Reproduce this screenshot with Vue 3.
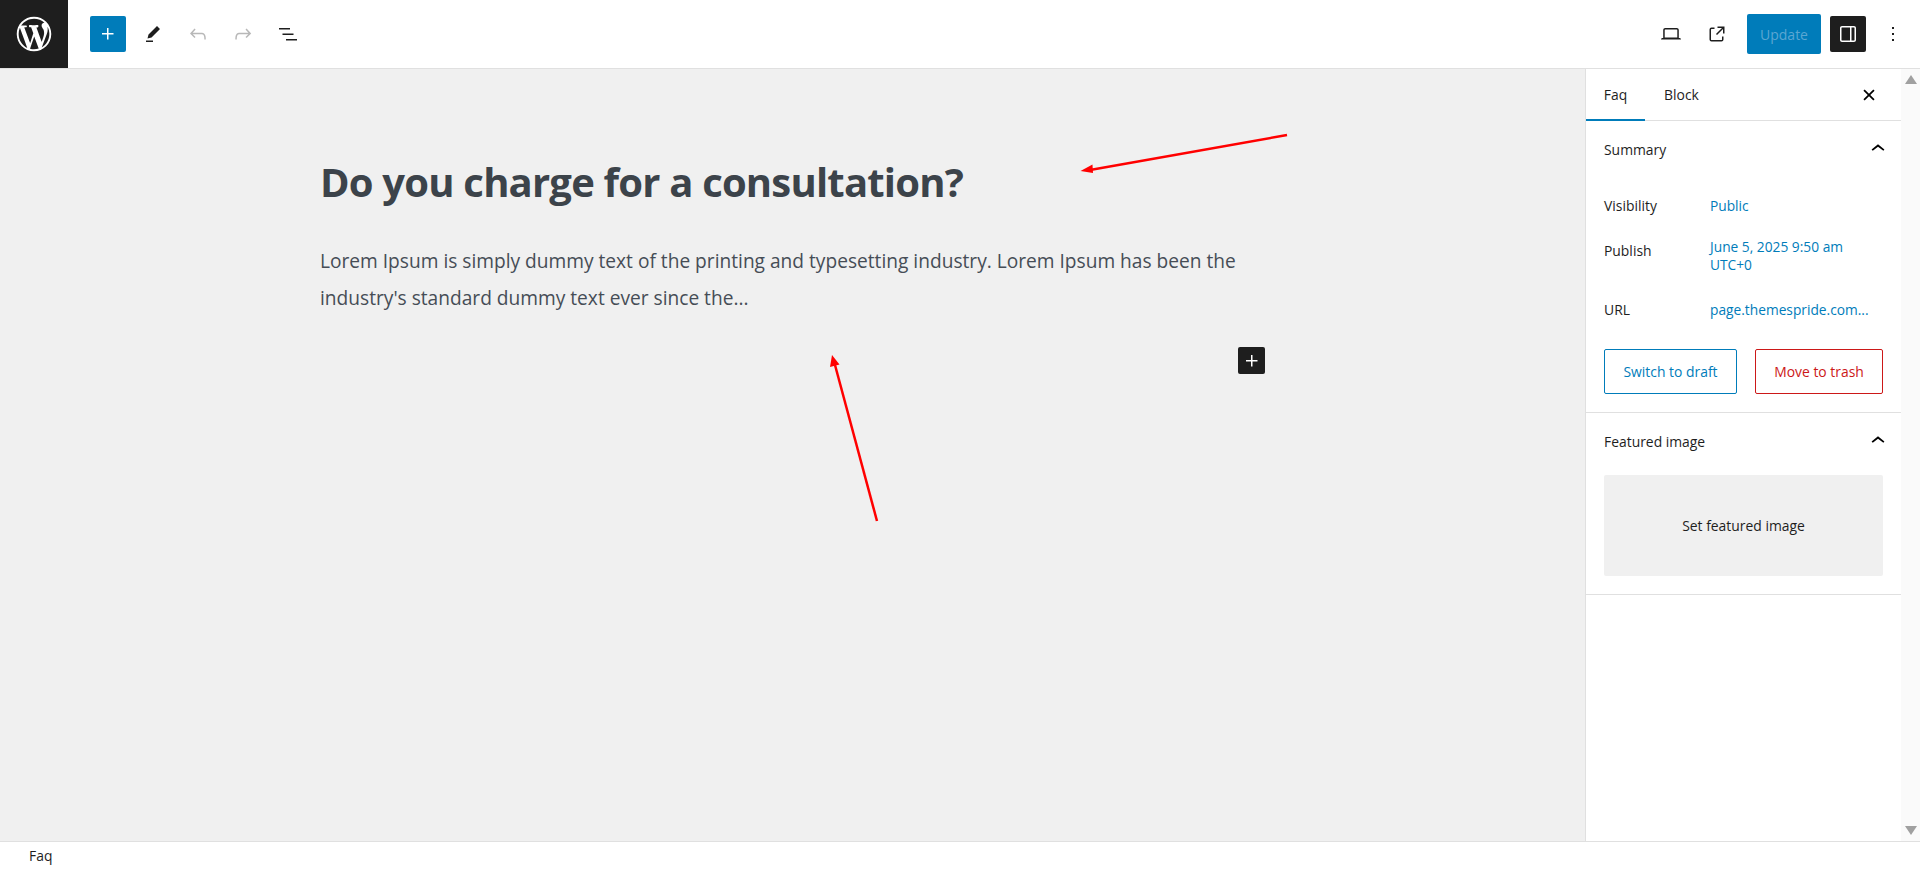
<template>
  <div class="editor">
    <header class="topbar">
      <div class="logo">
        <svg width="38" height="38" viewBox="-1 -1 22 22"><path fill="#fff" d="M20 10c0-5.51-4.49-10-10-10C4.48 0 0 4.49 0 10c0 5.52 4.48 10 10 10 5.51 0 10-4.48 10-10zM7.78 15.37L4.37 6.22c.55-.02 1.17-.08 1.17-.08.5-.06.44-1.13-.06-1.11 0 0-1.45.11-2.37.11-.18 0-.37 0-.58-.01C4.12 2.69 6.87 1.11 10 1.11c2.33 0 4.45.87 6.05 2.34-.68-.11-1.65.39-1.65 1.58 0 .74.45 1.36.9 2.1.35.61.55 1.36.55 2.46 0 1.49-1.4 5-1.4 5l-3.03-8.37c.54-.02.82-.17.82-.17.5-.05.44-1.25-.06-1.22 0 0-1.44.12-2.38.12-.87 0-2.33-.12-2.33-.12-.5-.03-.56 1.2-.06 1.22l.92.08 1.26 3.41zM17.41 10c.24-.64.74-1.87.43-4.25.7 1.29 1.05 2.71 1.05 4.25 0 3.29-1.73 6.24-4.4 7.78.97-2.59 1.94-5.2 2.92-7.78zM6.1 18.09C3.12 16.65 1.11 13.53 1.11 10c0-1.3.23-2.48.72-3.59C3.25 10.3 4.67 14.2 6.1 18.09zm4.03-6.63l2.58 6.98c-.86.29-1.76.45-2.71.45-.79 0-1.57-.11-2.29-.33.81-2.38 1.62-4.74 2.42-7.1z"/></svg>
      </div>
      <div class="tools">
        <button class="icon-btn primary"><svg width="24" height="24" viewBox="0 0 24 24"><path d="M11 12.5V17.5H12.5V12.5H17.5V11H12.5V6H11V11H6V12.5H11Z"/></svg></button>
        <button class="icon-btn"><svg width="24" height="24" viewBox="0 0 24 24"><path d="m19 7-3-3-8.5 8.5-1 4 4-1L19 7Zm-7 11.5H5V20h7v-1.5Z"/></svg></button>
        <button class="icon-btn muted"><svg width="24" height="24" viewBox="0 0 24 24"><path d="M18.3 11.7c-.6-.6-1.4-.9-2.3-.9H6.7l2.9-3.3-1.1-1-4.5 5L8.5 16l1-1-2.7-2.7H16c.5 0 .9.2 1.3.5 1 1 1 3.4 1 4.5v.3h1.5v-.2c0-1.5 0-4.3-1.5-5.7z"/></svg></button>
        <button class="icon-btn muted"><svg width="24" height="24" viewBox="0 0 24 24"><path d="M15.6 6.5l-1.1 1 2.9 3.3H8c-.9 0-1.7.3-2.3.9-1.4 1.5-1.4 4.2-1.4 5.6v.2h1.5v-.3c0-1.1 0-3.5 1-4.5.3-.3.7-.5 1.3-.5h9.2L14.5 15l1.1 1.1 4.6-4.6-4.6-5z"/></svg></button>
        <button class="icon-btn"><svg width="24" height="24" viewBox="0 0 24 24"><path d="M3 6h11v1.5H3V6Zm3.5 5.5h11V13h-11v-1.5ZM21 17H10v1.5h11V17Z"/></svg></button>
      </div>
      <div class="actions">
        <button class="icon-btn"><svg width="24" height="24" viewBox="0 0 24 24"><path d="M20.5 16h-.7V8c0-1.1-.9-2-2-2H6.2c-1.1 0-2 .9-2 2v8h-.7c-.8 0-1.5.7-1.5 1.5h20c0-.8-.7-1.5-1.5-1.5zM5.7 8c0-.3.2-.5.5-.5h11.6c.3 0 .5.2.5.5v7.6H5.7V8z"/></svg></button>
        <button class="icon-btn"><svg width="24" height="24" viewBox="0 0 24 24"><path d="M19.5 4.5h-7V6h4.44l-5.97 5.97 1.06 1.06L18 7.06v4.44h1.5v-7Zm-13 1a2 2 0 0 0-2 2v10a2 2 0 0 0 2 2h10a2 2 0 0 0 2-2v-3H17v3a.5.5 0 0 1-.5.5h-10a.5.5 0 0 1-.5-.5v-10a.5.5 0 0 1 .5-.5h3V5.5h-3Z"/></svg></button>
        <button class="update">Update</button>
        <button class="icon-btn dark"><svg width="24" height="24" viewBox="0 0 24 24"><path d="M18 4H6c-1.1 0-2 .9-2 2v12c0 1.1.9 2 2 2h12c1.1 0 2-.9 2-2V6c0-1.1-.9-2-2-2zm-4 14.5H6c-.3 0-.5-.2-.5-.5V6c0-.3.2-.5.5-.5h8v13zm4.5-.5c0 .3-.2.5-.5.5h-2.5v-13H18c.3 0 .5.2.5.5v12z"/></svg></button>
        <button class="icon-btn more"><svg width="24" height="24" viewBox="0 0 24 24"><path d="M13 19h-2v-2h2v2zm0-6h-2v-2h2v2zm0-6h-2V5h2v2z"/></svg></button>
      </div>
    </header>

    <div class="body">
      <main class="canvas">
        <h1 class="title">Do you charge for a consultation?</h1>
        <p class="excerpt">Lorem Ipsum is simply dummy text of the printing and typesetting industry. Lorem Ipsum has been the industry's standard dummy text ever since the...</p>
        <div class="add-row">
          <button class="add-block"><svg width="24" height="24" viewBox="0 0 24 24"><path d="M11 12.5V17.5H12.5V12.5H17.5V11H12.5V6H11V11H6V12.5H11Z"/></svg></button>
        </div>
      </main>

      <aside class="sidebar">
        <div class="tabs">
          <span class="tab active">Faq</span>
          <span class="tab">Block</span>
          <svg class="close" width="28" height="28" viewBox="0 0 24 24"><path d="M12 13.06l3.712 3.713 1.061-1.06L13.061 12l3.712-3.712-1.06-1.06L12 10.938 8.288 7.227l-1.061 1.06L10.939 12l-3.712 3.712 1.06 1.061L12 13.061z"/></svg>
        </div>

        <section class="panel summary">
          <div class="panel-head">
            <span>Summary</span>
            <svg width="28" height="28" viewBox="0 0 24 24"><path d="M6.5 12.4L12 8l5.5 4.4-.9 1.2L12 10l-4.5 3.6-1-1.2z"/></svg>
          </div>
          <div v-for="row in rows" :key="row.label" :class="['row', row.cls]">
            <span class="label">{{ row.label }}</span>
            <span class="value">{{ row.value }}</span>
          </div>
          <div class="post-actions">
            <button class="outline draft">Switch to draft</button>
            <button class="outline trash">Move to trash</button>
          </div>
        </section>

        <section class="panel featured">
          <div class="panel-head">
            <span>Featured image</span>
            <svg width="28" height="28" viewBox="0 0 24 24"><path d="M6.5 12.4L12 8l5.5 4.4-.9 1.2L12 10l-4.5 3.6-1-1.2z"/></svg>
          </div>
          <div class="image-box">Set featured image</div>
        </section>
      </aside>

      <div class="scrollbar">
        <span class="arrow up"></span>
        <span class="arrow down"></span>
      </div>

      <!-- annotation arrows drawn on top of the screenshot -->
      <svg class="marks" width="1920" height="772" viewBox="0 69 1920 772">
        <g stroke="#f00" stroke-width="2.5" fill="#f00">
          <line x1="1287" y1="135" x2="1090" y2="170" />
          <line x1="877" y1="521" x2="835" y2="365" />
        </g>
        <polygon fill="#f00" points="1080.5,171 1092.5,164.5 1093,173" />
        <polygon fill="#f00" points="832,355 830,367 839.5,364.5" />
      </svg>
    </div>

    <footer class="crumbs">Faq</footer>
  </div>
</template>

<script setup>
const rows = [
  { label: 'Visibility', value: 'Public', cls: 'visibility' },
  { label: 'Publish', value: 'June 5, 2025 9:50 am UTC+0', cls: 'publish' },
  { label: 'URL', value: 'page.themespride.com...', cls: 'url' }
]
</script>

<style>
html, body {
  margin: 0;
  overflow: hidden;
}
</style>

<style scoped>
.editor {
  display: flex;
  flex-direction: column;
  height: 869px;
  font-family: "Open Sans", "Noto Sans", sans-serif;
  font-size: 13.9px;
  color: #1e1e1e;
  background: #fff;
}
button {
  font-family: inherit;
  border: none;
  background: none;
  padding: 0;
  cursor: pointer;
}
.topbar {
  display: flex;
  align-items: center;
  height: 68px;
  border-bottom: 1px solid #e0e0e0;
  flex: none;
}
.logo {
  width: 68px;
  height: 68px;
  background: #1e1e1e;
  display: flex;
  align-items: center;
  justify-content: center;
}
.tools {
  display: flex;
  gap: 9px;
  margin-left: 22px;
}
.actions {
  display: flex;
  align-items: center;
  margin-left: auto;
  padding-right: 9px;
}
.icon-btn {
  width: 36px;
  height: 36px;
  display: flex;
  align-items: center;
  justify-content: center;
  border-radius: 2px;
  fill: #1e1e1e;
}
.icon-btn.primary {
  background: #007cba;
  fill: #fff;
}
.icon-btn.muted {
  fill: #b8b8b8;
}
.icon-btn.dark {
  background: #1e1e1e;
  fill: #fff;
  margin-left: 9px;
}
.actions .icon-btn + .icon-btn:not(.dark) {
  margin-left: 10px;
}
.actions .more {
  margin-left: 9px !important;
}
.update {
  width: 74px;
  height: 40px;
  margin-left: 12px;
  border-radius: 2px;
  background: #007cba;
  color: #5ba6d2;
  font-size: 14px;
}
.body {
  flex: 1;
  display: flex;
  position: relative;
  min-height: 0;
}
.canvas {
  flex: 1;
  background: #f0f0f0;
  padding: 0 0 0 320px;
  min-width: 0;
}
.title {
  margin: 87px 0 0 0;
  font-size: 40px;
  line-height: 52px;
  font-weight: 700;
  letter-spacing: -0.8px;
  color: #3c434a;
}
.excerpt {
  width: 945px;
  margin: 35px 0 0;
  font-size: 19.15px;
  line-height: 37px;
  color: #464d56;
}
.add-row {
  width: 945px;
  display: flex;
  justify-content: flex-end;
  margin-top: 30px;
}
.add-block {
  width: 27px;
  height: 27px;
  border-radius: 2px;
  background: #1e1e1e;
  fill: #fff;
  display: flex;
  align-items: center;
  justify-content: center;
}
.sidebar {
  width: 315px;
  flex: none;
  border-left: 1px solid #e0e0e0;
  background: #fff;
}
.tabs {
  height: 51px;
  display: flex;
  align-items: center;
  position: relative;
  border-bottom: 1px solid #e0e0e0;
}
.tab {
  width: 59px;
  height: 51px;
  box-sizing: border-box;
  display: flex;
  align-items: center;
  justify-content: center;
  font-weight: 500;
  color: #1e1e1e;
}
.tab + .tab {
  width: 73px;
}
.tab.active {
  border-bottom: 2px solid #007cba;
  margin-bottom: -1px;
}
.close {
  margin-left: auto;
  margin-right: 18px;
}
.panel {
  border-bottom: 1px solid #e0e0e0;
  padding: 0 18px;
}
.panel-head {
  height: 56px;
  display: flex;
  align-items: center;
  justify-content: space-between;
  font-weight: 500;
}
.panel-head svg {
  margin-right: -9px;
}
.summary {
  height: 292px;
  box-sizing: border-box;
}
.row {
  display: flex;
  line-height: 18px;
  margin-top: 20px;
}
.label {
  width: 106px;
  flex: none;
}
.value {
  color: #007cba;
  width: 150px;
  font-size: 13.75px;
}
.row.publish {
  margin-top: 23px;
}
.row.url {
  margin-top: 27px;
}
.row.publish .label {
  margin-top: 4px;
}
.post-actions {
  display: flex;
  justify-content: space-between;
  margin-top: 30px;
}
.outline {
  height: 45px;
  border-radius: 2px;
  font-size: 13.9px;
  background: #fff;
}
.draft {
  width: 133px;
  border: 1px solid #007cba;
  color: #007cba;
}
.trash {
  width: 128px;
  border: 1px solid #cc1818;
  color: #cc1818;
}
.featured {
  height: 182px;
  box-sizing: border-box;
}
.featured .panel-head {
  height: 62px;
  box-sizing: border-box;
  padding-bottom: 6px;
}
.image-box {
  height: 101px;
  background: #f0f0f0;
  border-radius: 2px;
  display: flex;
  align-items: center;
  justify-content: center;
}
.scrollbar {
  width: 19px;
  flex: none;
  background: #fafafa;
  display: flex;
  flex-direction: column;
  justify-content: space-between;
  align-items: center;
  padding: 6px 0;
}
.arrow {
  width: 0;
  height: 0;
  border-left: 6px solid transparent;
  border-right: 6px solid transparent;
}
.arrow.up {
  border-bottom: 9px solid #a0a0a0;
}
.arrow.down {
  border-top: 9px solid #a0a0a0;
}
.marks {
  position: absolute;
  left: 0;
  top: 0;
  pointer-events: none;
}
.crumbs {
  flex: none;
  height: 27px;
  border-top: 1px solid #e0e0e0;
  padding-left: 29px;
  line-height: 27px;
  background: #fff;
}
</style>
